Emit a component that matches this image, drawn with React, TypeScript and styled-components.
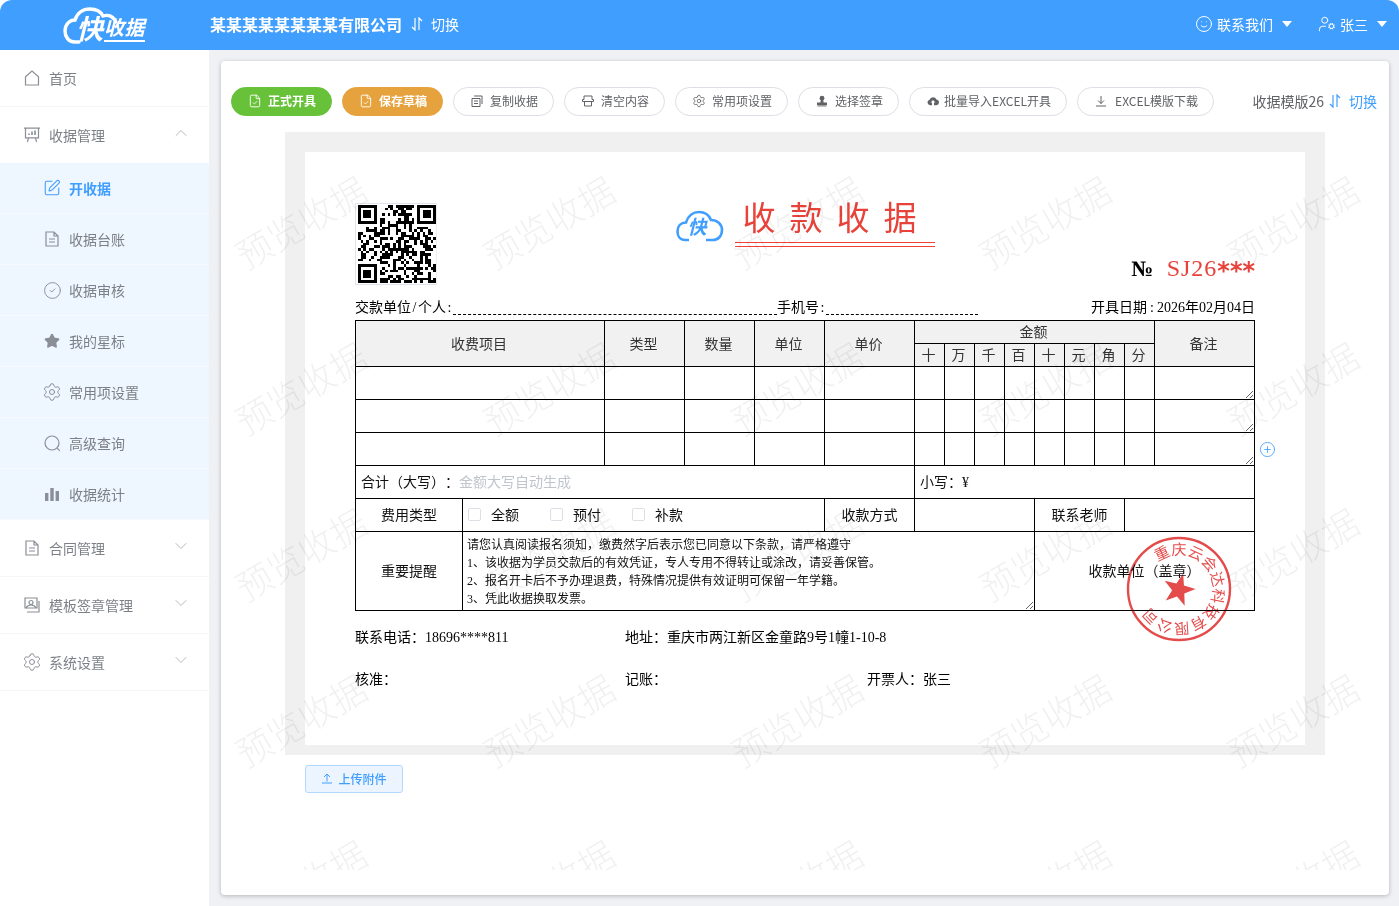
import * as React from 'react';
import styled, { createGlobalStyle } from 'styled-components';
import {
  ChevronDown,
  ChevronUp,
  CircleCheck,
  CirclePlus,
  FileCheck,
  Settings,
  Smile,
  SquarePen,
  Star,
  UserCog,
} from 'lucide-react';

const UI_FONT = `"Noto Sans CJK SC", "Noto Sans", sans-serif`;
const DOC_FONT = `"Liberation Serif", "Noto Sans CJK SC", serif`;

const GlobalStyle = createGlobalStyle`
  html, body {
    margin: 0;
    padding: 0;
    height: 100%;
    overflow: hidden;
    background: #fff;
    font-family: ${UI_FONT};
  }
  * {
    box-sizing: border-box;
    text-spacing-trim: space-all;
  }
`;

const Page = styled.div`
  width: 1399px;
  height: 906px;
  display: flex;
  flex-direction: column;
`;

const Header = styled.header`
  height: 50px;
  flex: none;
  padding-bottom: 2px;
  background: #409eff;
  border-radius: 12px 12px 0 0;
  color: #fff;
  display: flex;
  align-items: center;
`;

const LogoBox = styled.div`
  width: 210px;
  flex: none;
  height: 50px;
  align-self: flex-start;
  position: relative;
`;

const LogoCloud = styled.svg`
  position: absolute;
  left: 63px;
  top: 6px;
`;

const LogoFast = styled.span`
  position: absolute;
  left: 76px;
  top: 11px;
  font-size: 27px;
  line-height: 34px;
  font-weight: 700;
  font-style: italic;
`;

const LogoName = styled.span`
  position: absolute;
  left: 104px;
  top: 14px;
  font-size: 20px;
  line-height: 26px;
  font-weight: 700;
  font-style: italic;
  border-bottom: 2px solid #fff;
  letter-spacing: 0.5px;
`;

const Company = styled.div`
  font-size: 16px;
  font-weight: 700;
`;

const SwitchLink = styled.span<{ $blue?: boolean }>`
  display: inline-flex;
  align-items: center;
  gap: 7px;
  font-size: 14px;
  margin-left: ${p => (p.$blue ? '4px' : '8px')};
  color: ${p => (p.$blue ? '#409eff' : '#fff')};
`;

const HeaderRight = styled.div`
  margin-left: auto;
  display: flex;
  align-items: center;
  padding-right: 12px;
  font-size: 14px;
`;

const HeaderItem = styled.span`
  display: inline-flex;
  align-items: center;
  gap: 4px;
  margin-left: 26px;
`;

const Caret = styled.i`
  width: 0;
  height: 0;
  border-left: 5px solid transparent;
  border-right: 5px solid transparent;
  border-top: 6px solid #fff;
  margin-left: 5px;
`;

const Body = styled.div`
  flex: 1;
  display: flex;
  min-height: 0;
`;

const Sidebar = styled.nav`
  width: 209px;
  flex: none;
  background: #fff;
`;

const IconSlot = styled.span<{ $size?: number }>`
  width: ${p => p.$size || 16}px;
  height: ${p => p.$size || 16}px;
  flex: none;
  display: flex;
  align-items: center;
  justify-content: center;
  svg { flex: none; }
`;

const MenuRow = styled.div`
  height: 57px;
  display: flex;
  align-items: center;
  gap: 9px;
  padding: 0 18px 0 24px;
  border-bottom: 1px solid #f6f6f6;
  color: #7d8087;
  font-size: 14px;
  svg { color: #8b8e96; }
`;

const MenuArrow = styled.span`
  margin-left: auto;
  display: flex;
  margin-top: -4px;
  svg { color: #a8abb2; }
`;

const SubMenu = styled.div`
  margin-top: -1px;
  background: #eef6ff;
`;

const SubRow = styled.div<{ $active?: boolean }>`
  height: 51px;
  display: flex;
  align-items: center;
  gap: 9px;
  padding-left: 44px;
  border-bottom: 1px solid #f6faff;
  font-size: 14px;
  font-weight: ${p => (p.$active ? 700 : 400)};
  color: ${p => (p.$active ? '#409eff' : '#7d8087')};
  svg { color: ${p => (p.$active ? '#409eff' : '#8b8e96')}; }
`;

const Main = styled.main`
  flex: 1;
  background: #eff1f5;
  padding: 11px 10px 11px 12px;
  min-width: 0;
`;

const Card = styled.section`
  position: relative;
  height: 834px;
  background: #fff;
  border-radius: 4px;
  box-shadow: 0 1px 4px rgba(0, 0, 0, 0.25);
  padding: 26px 12px 0 10px;
`;

const Watermarks = styled.div`
  position: absolute;
  left: -45px;
  right: 0;
  top: 77px;
  height: 732px;
  overflow: hidden;
  pointer-events: none;
  display: grid;
  grid-template-columns: repeat(5, 248px);
  grid-auto-rows: 166px;
  z-index: 3;
`;

const Watermark = styled.span`
  display: flex;
  align-items: center;
  justify-content: center;
  font-size: 36px;
  font-weight: 300;
  white-space: nowrap;
  color: rgba(0, 0, 0, 0.06);
  transform: rotate(-30deg);
`;

const Toolbar = styled.div`
  display: flex;
  align-items: center;
  gap: 10px;
  height: 29px;
`;

const ToolButton = styled.button<{ $color?: string; $gap?: number }>`
  height: 29px;
  padding: 0 15px 2px 17px;
  display: inline-flex;
  align-items: center;
  gap: ${p => p.$gap ?? 7}px;
  border-radius: 15px;
  font-family: ${UI_FONT};
  font-size: 12px;
  white-space: nowrap;
  border: 1px solid ${p => p.$color || '#dcdfe6'};
  background: ${p => p.$color || '#fff'};
  color: ${p => (p.$color ? '#fff' : '#606266')};
  font-weight: ${p => (p.$color ? 700 : 400)};
`;

const TemplateSwitch = styled.div`
  margin-left: auto;
  padding-bottom: 2px;
  font-size: 14px;
  color: #606266;
  display: flex;
  align-items: center;
`;

const DocFrame = styled.div`
  width: 1040px;
  margin: 16px 0 0 54px;
  padding: 20px 20px 10px;
  background: #f0f0f0;
`;

const Paper = styled.div`
  height: 593px;
  background: #fff;
  padding: 51px 50px 0;
  font-family: ${DOC_FONT};
  font-size: 14px;
  color: #000;
`;

const DocHead = styled.div`
  height: 93px;
  position: relative;
  display: grid;
  grid-template-columns: 1fr auto 1fr;
`;

const QrBox = styled.div`
  width: 82px;
  height: 82px;
  border: 1px solid #dfe3ea;
  border-right-color: #eee;
  padding: 1px 0 0 2px;
`;

const TitleGroup = styled.div`
  display: flex;
  align-items: flex-start;
  gap: 11px;
`;

const TitleLogo = styled.div`
  position: relative;
  width: 48px;
  height: 32px;
  margin-top: 7px;
  color: #409eff;
`;

const TitleLogoText = styled.span`
  position: absolute;
  left: 12px;
  top: 3px;
  font-family: ${UI_FONT};
  font-size: 19px;
  line-height: 26px;
  font-weight: 700;
  font-style: italic;
`;

const Title = styled.div`
  width: 200px;
  margin-top: -9px;
`;

const TitleText = styled.h1`
  margin: 0 0 3px;
  padding-left: 8px;
  font-family: ${UI_FONT};
  font-size: 33px;
  line-height: 45px;
  font-weight: 400;
  letter-spacing: 14px;
  white-space: nowrap;
  color: #e8433a;
`;

const TitleRule = styled.div`
  height: 5px;
  border-top: 1px solid #ef4136;
  border-bottom: 1px solid #ef4136;
`;

const SerialNo = styled.div`
  justify-self: end;
  align-self: end;
  margin-bottom: 11px;
  display: flex;
  align-items: baseline;
  gap: 13px;
`;

const SerialMark = styled.span`
  font-size: 22px;
  font-weight: 700;
`;

const SerialValue = styled.span`
  font-size: 24px;
  letter-spacing: 1px;
  color: #e8433a;
`;

const SerialStars = styled.span`
  font-family: "DejaVu Sans", sans-serif;
  font-weight: 700;
  letter-spacing: 0;
  vertical-align: -3px;
`;

const MetaRow = styled.div`
  height: 20px;
  margin-bottom: 4px;
  display: flex;
  align-items: center;
  white-space: nowrap;
`;

const HalfChar = styled.span<{ $width?: number }>`
  display: inline-block;
  width: ${p => p.$width || 7}px;
  text-align: center;
`;

const BlankLine = styled.span<{ $width: number }>`
  width: ${p => p.$width}px;
  height: 18px;
  flex: none;
  border-bottom: 1px dashed #000;
`;

const MetaDate = styled.span`
  margin-left: auto;
`;

const TableWrap = styled.div`
  position: relative;
`;

const Table = styled.table`
  width: 899px;
  table-layout: fixed;
  border-collapse: collapse;
  font-size: 14px;
`;

const Th = styled.th`
  border: 1px solid #000;
  background: #f1f1f1;
  font-weight: 400;
  color: #333;
  padding: 0 2px 2px 0;
  text-align: center;
`;

const Td = styled.td<{ $left?: boolean; $flush?: boolean }>`
  border: 1px solid #000;
  padding: ${p => (p.$flush ? '0' : p.$left ? '0 0 2px 5px' : '0 0 2px')};
  text-align: ${p => (p.$left ? 'left' : 'center')};
  color: #111;
`;

const NoteArea = styled.textarea`
  display: block;
  width: 100%;
  height: 32px;
  border: none;
  outline: none;
  background: transparent;
  padding: 0;
  font-family: ${DOC_FONT};
`;

const Hint = styled.span`
  color: #c0c4cc;
`;

const CheckGroup = styled.div`
  display: flex;
  padding: 0 0 2px 5px;
  gap: 31px;
`;

const CheckItem = styled.label`
  display: inline-flex;
  align-items: center;
  gap: 10px;
`;

const CheckBox = styled.i`
  width: 13px;
  height: 13px;
  border: 1px solid #dcdfe6;
  border-radius: 2px;
  background: #fff;
`;

const Reminder = styled.div`
  height: 77px;
  padding: 3px 4px 0;
  font-size: 12px;
  line-height: 18px;
  text-align: left;
  white-space: nowrap;
  overflow: hidden;
  resize: vertical;
`;

const AddRow = styled.span`
  position: absolute;
  right: -21px;
  top: 121px;
  display: flex;
  color: #409eff;
`;

const Stamp = styled.div`
  position: absolute;
  left: 770px;
  top: 215px;
  width: 108px;
  height: 108px;
  opacity: 0.92;
  mix-blend-mode: multiply;
`;

const FootRow = styled.div`
  display: grid;
  grid-template-columns: 270px 242px 1fr;
  height: 20px;
  align-items: center;
  white-space: nowrap;
`;

const FootRows = styled.div`
  margin-top: 15px;
  display: grid;
  gap: 22px;
`;

const UploadButton = styled.button`
  margin: 10px 0 0 74px;
  width: 98px;
  height: 28px;
  padding: 0 0 2px;
  display: flex;
  align-items: center;
  justify-content: center;
  gap: 5px;
  background: #ecf5ff;
  border: 1px solid #b3d8ff;
  border-radius: 3px;
  color: #409eff;
  font-family: ${UI_FONT};
  font-size: 12px;
  font-weight: 500;
`;

// icons with no close match in the icon package
const SortIcon = ({ size = 14 }: { size?: number }) => (
  <svg width={size} height={size} viewBox="0 0 14 14" fill="none" stroke="currentColor" strokeWidth="1.2">
    <path d="M5 1v12L2 10M9 13V1l3 3" />
  </svg>
);

const HomeIcon = () => (
  <svg width="16" height="16" viewBox="0 0 16 16" fill="none" stroke="currentColor" strokeWidth="1.2">
    <path d="M1.500 6.800 8 1l6.500 5.800V15h-13z" />
  </svg>
);

const BoardIcon = () => (
  <svg width="16" height="16" viewBox="0 0 16 16" fill="none" stroke="currentColor" strokeWidth="1.2">
    <path d="M0 1.200h16M1.500 1.200v9.600h13V1.200M4.500 10.800 3.500 15M11.500 10.800l1 4.200" />
    <path d="M5 8V6.500M8 8V4.500M11 8V3.500" strokeWidth="1.6" />
  </svg>
);

const DocIcon = () => (
  <svg width="16" height="16" viewBox="0 0 16 16" fill="none" stroke="currentColor" strokeWidth="1.2">
    <path d="M2 1h8l4 4v10H2zM10 1v4h4M5 8h6M5 11h6" />
  </svg>
);

const BarsIcon = () => (
  <svg width="16" height="16" viewBox="0 0 16 16" fill="currentColor">
    <rect x="1" y="7" width="3.4" height="8" />
    <rect x="6.300" y="2" width="3.4" height="13" />
    <rect x="11.600" y="5" width="3.4" height="10" />
  </svg>
);

const SearchIcon = () => (
  <svg width="17" height="17" viewBox="0 0 17 17" fill="none" stroke="currentColor" strokeWidth="1.2">
    <circle cx="8" cy="8" r="7" />
    <path d="m13.200 13.200 2.600 2.600" />
  </svg>
);

const TemplateIcon = () => (
  <svg width="16" height="16" viewBox="0 0 16 16" fill="none" stroke="currentColor" strokeWidth="1.2">
    <path d="M1 1h12v10H1zM15 4v11H3" />
    <circle cx="7" cy="5.500" r="2" />
    <path d="M2 11c1-2 3-3 5-3s4 1 5 3" />
  </svg>
);

const CopyIcon = () => (
  <svg width="12" height="12" viewBox="0 0 12 12" fill="none" stroke="currentColor" strokeWidth="1">
    <path d="M1 3.500h8v8H1zM3 1h8v8M3 6h4M3 8.500h4" />
  </svg>
);

const BrushIcon = () => (
  <svg width="12" height="12" viewBox="0 0 12 12" fill="none" stroke="currentColor" strokeWidth="1">
    <path d="M2 1h8v3.500h1.500v2h-11v-2H2zM2.500 6.500V11h7V6.500" />
  </svg>
);

const StampIcon = () => (
  <svg width="12" height="12" viewBox="0 0 12 12" fill="currentColor">
    <circle cx="6" cy="3.200" r="2.400" />
    <path d="M4.800 5h2.400l.4 2.600H11V10H1V7.600h3.400z" />
    <rect x="1.500" y="10.400" width="9" height="1" />
  </svg>
);

const CloudIcon = () => (
  <svg width="12" height="12" viewBox="0 0 12 12" fill="currentColor">
    <path d="M3 10.200A2.800 2.800 0 0 1 2.600 4.700 3.600 3.600 0 0 1 9.400 4.600 2.800 2.800 0 0 1 9 10.200H7V7.600h1.400L6 5 3.600 7.600H5v2.600z" />
  </svg>
);

const DownloadIcon = () => (
  <svg width="12" height="12" viewBox="0 0 12 12" fill="none" stroke="currentColor" strokeWidth="1">
    <path d="M6 1v7.500M3 5.500l3 3 3-3M1 11h10" />
  </svg>
);

const UploadIcon = () => (
  <svg width="12" height="12" viewBox="0 0 12 12" fill="none" stroke="currentColor" strokeWidth="1">
    <path d="M6 9.500V2M3 5l3-3 3 3M1 11h10" />
  </svg>
);

// not a real code, only the look of one
const QrCode = () => {
  const size = 29;
  const cells: React.ReactNode[] = [];
  let seed = 20260204;
  const next = () => {
    seed = (seed * 1664525 + 1013904223) % 4294967296;
    return seed / 4294967296;
  };
  for (let y = 0; y < size; y++) {
    for (let x = 0; x < size; x++) {
      const dx = x - (x > 14 ? size - 7 : 0);
      const dy = y - (y > 14 ? size - 7 : 0);
      const inCorner = !(x > 14 && y > 14) && (x < 8 || x > size - 9) && (y < 8 || y > size - 9);
      let on: boolean;
      if (inCorner) {
        const inside = dx >= 0 && dx < 7 && dy >= 0 && dy < 7;
        const ring = inside && (dx === 0 || dx === 6 || dy === 0 || dy === 6);
        const core = inside && dx >= 2 && dx <= 4 && dy >= 2 && dy <= 4;
        on = ring || core;
      } else {
        on = next() > 0.5;
      }
      if (on) cells.push(<rect key={`${x}-${y}`} x={x} y={y} width="1" height="1" />);
    }
  }
  return (
    <svg width="78" height="78" viewBox="0 0 29 29" shapeRendering="crispEdges" fill="#000">
      {cells}
    </svg>
  );
};

const CompanyStamp = () => (
  <svg width="108" height="108" viewBox="0 0 108 108" fill="none">
    <defs>
      <path id="stamp-arc" d="M33.100 27.200A34 34 0 1 1 24.600 71" />
    </defs>
    <circle cx="54" cy="54" r="51" stroke="#e23b3b" strokeWidth="2.4" />
    <text fill="#e23b3b" fontFamily={UI_FONT} fontSize="15">
      <textPath href="#stamp-arc" startOffset="0" textLength="164">
        重庆云会达科技有限公司
      </textPath>
    </text>
    <path
      d="M54 38 57.900 49.400 70 49.700 60.300 57 63.800 68.600 54 61.800 44.200 68.600 47.700 57 38 49.700 50.100 49.400z"
      fill="#e23b3b"
      transform="rotate(15 54 54)"
    />
  </svg>
);

const WATERMARKS = Array.from({ length: 25 });

const SUB_MENU = [
  { label: '收据台账', icon: <DocIcon /> },
  { label: '收据审核', icon: <CircleCheck size={19} strokeWidth={1.2} /> },
  { label: '我的星标', icon: <Star size={16} fill="currentColor" /> },
  { label: '常用项设置', icon: <Settings size={20} strokeWidth={1.2} /> },
  { label: '高级查询', icon: <SearchIcon /> },
  { label: '收据统计', icon: <BarsIcon /> },
];

const LOWER_MENU = [
  { label: '合同管理', icon: <DocIcon /> },
  { label: '模板签章管理', icon: <TemplateIcon /> },
  { label: '系统设置', icon: <Settings size={20} strokeWidth={1.2} /> },
];

const TOOLS = [
  { label: '复制收据', icon: <CopyIcon /> },
  { label: '清空内容', icon: <BrushIcon /> },
  { label: '常用项设置', icon: <Settings size={14} strokeWidth={1.4} /> },
  { label: '选择签章', icon: <StampIcon /> },
  { label: '批量导入EXCEL开具', icon: <CloudIcon />, gap: 5 },
  { label: 'EXCEL模版下载', icon: <DownloadIcon />, gap: 8 },
];

const COLUMNS = [107, 142, 80, 70, 70, 90, 30, 30, 30, 30, 30, 30, 30, 30, 100];
const HEAD_CELLS = ['类型', '数量', '单位', '单价'];
const DIGITS = ['十', '万', '千', '百', '十', '元', '角', '分'];
const REMINDER = [
  '请您认真阅读报名须知，缴费然字后表示您已同意以下条款，请严格遵守',
  '1、该收据为学员交款后的有效凭证，专人专用不得转让或涂改，请妥善保管。',
  '2、报名开卡后不予办理退费，特殊情况提供有效证明可保留一年学籍。',
  '3、凭此收据换取发票。',
];

export default function App() {
  return (
    <Page>
      <GlobalStyle />
      <Header>
        <LogoBox>
          <LogoCloud width="60" height="40" viewBox="0 0 60 40" fill="none" stroke="#fff" strokeWidth="3.4" strokeLinecap="round">
            <path d="M16 36H12C5 36 2 30 2 25 2 18 7 14 12 14 14 7 20 3 27 3 33 3 38 6 40 10 46 8 51 11 53 16" />
          </LogoCloud>
          <LogoFast>快</LogoFast>
          <LogoName>收据</LogoName>
        </LogoBox>
        <Company>某某某某某某某某有限公司</Company>
        <SwitchLink>
          <SortIcon />
          切换
        </SwitchLink>
        <HeaderRight>
          <HeaderItem>
            <Smile size={18} strokeWidth={1.3} />
            联系我们
            <Caret />
          </HeaderItem>
          <HeaderItem>
            <UserCog size={18} strokeWidth={1.3} />
            张三
            <Caret />
          </HeaderItem>
        </HeaderRight>
      </Header>
      <Body>
        <Sidebar>
          <MenuRow>
            <IconSlot>
              <HomeIcon />
            </IconSlot>
            首页
          </MenuRow>
          <MenuRow>
            <IconSlot>
              <BoardIcon />
            </IconSlot>
            收据管理
            <MenuArrow>
              <ChevronUp size={20} strokeWidth={1} />
            </MenuArrow>
          </MenuRow>
          <SubMenu>
            <SubRow $active>
              <IconSlot>
                <SquarePen size={18} strokeWidth={1.4} />
              </IconSlot>
              开收据
            </SubRow>
            {SUB_MENU.map(item => (
              <SubRow key={item.label}>
                <IconSlot>{item.icon}</IconSlot>
                {item.label}
              </SubRow>
            ))}
          </SubMenu>
          {LOWER_MENU.map(item => (
            <MenuRow key={item.label}>
              <IconSlot>{item.icon}</IconSlot>
              {item.label}
              <MenuArrow>
                <ChevronDown size={20} strokeWidth={1} />
              </MenuArrow>
            </MenuRow>
          ))}
        </Sidebar>
        <Main>
          <Card>
            <Watermarks>
              {WATERMARKS.map((_, i) => (
                <Watermark key={i}>预览收据</Watermark>
              ))}
            </Watermarks>
            <Toolbar>
              <ToolButton $color="#67c23a">
                <IconSlot $size={12}>
                  <FileCheck size={14} strokeWidth={1.6} />
                </IconSlot>
                正式开具
              </ToolButton>
              <ToolButton $color="#e6a23c">
                <IconSlot $size={12}>
                  <FileCheck size={14} strokeWidth={1.6} />
                </IconSlot>
                保存草稿
              </ToolButton>
              {TOOLS.map(tool => (
                <ToolButton key={tool.label} $gap={tool.gap}>
                  <IconSlot $size={12}>{tool.icon}</IconSlot>
                  {tool.label}
                </ToolButton>
              ))}
              <TemplateSwitch>
                收据模版26
                <SwitchLink $blue>
                  <SortIcon />
                  切换
                </SwitchLink>
              </TemplateSwitch>
            </Toolbar>
            <DocFrame>
              <Paper>
                <DocHead>
                  <QrBox>
                    <QrCode />
                  </QrBox>
                  <TitleGroup>
                    <TitleLogo>
                      <svg width="48" height="32" viewBox="0 0 48 32" fill="none" stroke="currentColor" strokeWidth="2.6">
                        <path d="M13 30H9C4 30 1.500 26 1.500 21.500 1.500 16 5 12.500 10 12.500 12 6 17 2 23 2 29 2 33 5 35 10 41 10 46 14 46 20 46 26 42 30 37 30H30" />
                      </svg>
                      <TitleLogoText>快</TitleLogoText>
                    </TitleLogo>
                    <Title>
                      <TitleText>收款收据</TitleText>
                      <TitleRule />
                    </Title>
                  </TitleGroup>
                  <SerialNo>
                    <SerialMark>№</SerialMark>
                    <SerialValue>
                      SJ26<SerialStars>***</SerialStars>
                    </SerialValue>
                  </SerialNo>
                </DocHead>
                <MetaRow>
                  <span>
                    交款单位<HalfChar>/</HalfChar>个人<HalfChar>:</HalfChar>
                  </span>
                  <BlankLine $width={324} />
                  <span>
                    手机号<HalfChar>:</HalfChar>
                  </span>
                  <BlankLine $width={152} />
                  <MetaDate>
                    开具日期<HalfChar $width={10}>:</HalfChar>2026年02月04日
                  </MetaDate>
                </MetaRow>
                <TableWrap>
                  <Table>
                    <colgroup>
                      {COLUMNS.map((w, i) => (
                        <col key={i} width={w} />
                      ))}
                    </colgroup>
                    <tbody>
                      <tr style={{ height: 23 }}>
                        <Th colSpan={2} rowSpan={2}>收费项目</Th>
                        {HEAD_CELLS.map(text => (
                          <Th key={text} rowSpan={2}>{text}</Th>
                        ))}
                        <Th colSpan={8}>金额</Th>
                        <Th rowSpan={2}>备注</Th>
                      </tr>
                      <tr style={{ height: 23 }}>
                        {DIGITS.map((d, i) => (
                          <Th key={i}>{d}</Th>
                        ))}
                      </tr>
                      {[0, 1, 2].map(row => (
                        <tr key={row} style={{ height: 33 }}>
                          <Td colSpan={2} />
                          {HEAD_CELLS.map(text => (
                            <Td key={text} />
                          ))}
                          {DIGITS.map((_, i) => (
                            <Td key={i} />
                          ))}
                          <Td $flush>
                            <NoteArea />
                          </Td>
                        </tr>
                      ))}
                      <tr style={{ height: 33 }}>
                        <Td colSpan={6} $left>
                          合计（大写）：<Hint>金额大写自动生成</Hint>
                        </Td>
                        <Td colSpan={9} $left>小写：¥</Td>
                      </tr>
                      <tr style={{ height: 33 }}>
                        <Td>费用类型</Td>
                        <Td colSpan={4} $left $flush>
                          <CheckGroup>
                            {['全额', '预付', '补款'].map(text => (
                              <CheckItem key={text}>
                                <CheckBox />
                                {text}
                              </CheckItem>
                            ))}
                          </CheckGroup>
                        </Td>
                        <Td>收款方式</Td>
                        <Td colSpan={4} />
                        <Td colSpan={3}>联系老师</Td>
                        <Td colSpan={2} />
                      </tr>
                      <tr style={{ height: 79 }}>
                        <Td>重要提醒</Td>
                        <Td colSpan={9} $left $flush>
                          <Reminder>
                            {REMINDER.map(line => (
                              <div key={line}>{line}</div>
                            ))}
                          </Reminder>
                        </Td>
                        <Td colSpan={5}>收款单位（盖章）</Td>
                      </tr>
                    </tbody>
                  </Table>
                  <AddRow>
                    <CirclePlus size={17} strokeWidth={1.2} />
                  </AddRow>
                  <Stamp>
                    <CompanyStamp />
                  </Stamp>
                </TableWrap>
                <FootRows>
                  <FootRow>
                    <span>联系电话：18696****811</span>
                    <span>地址：重庆市两江新区金童路9号1幢1-10-8</span>
                  </FootRow>
                  <FootRow>
                    <span>核准：</span>
                    <span>记账：</span>
                    <span>开票人：张三</span>
                  </FootRow>
                </FootRows>
              </Paper>
            </DocFrame>
            <UploadButton>
              <UploadIcon />
              上传附件
            </UploadButton>
          </Card>
        </Main>
      </Body>
    </Page>
  );
}
